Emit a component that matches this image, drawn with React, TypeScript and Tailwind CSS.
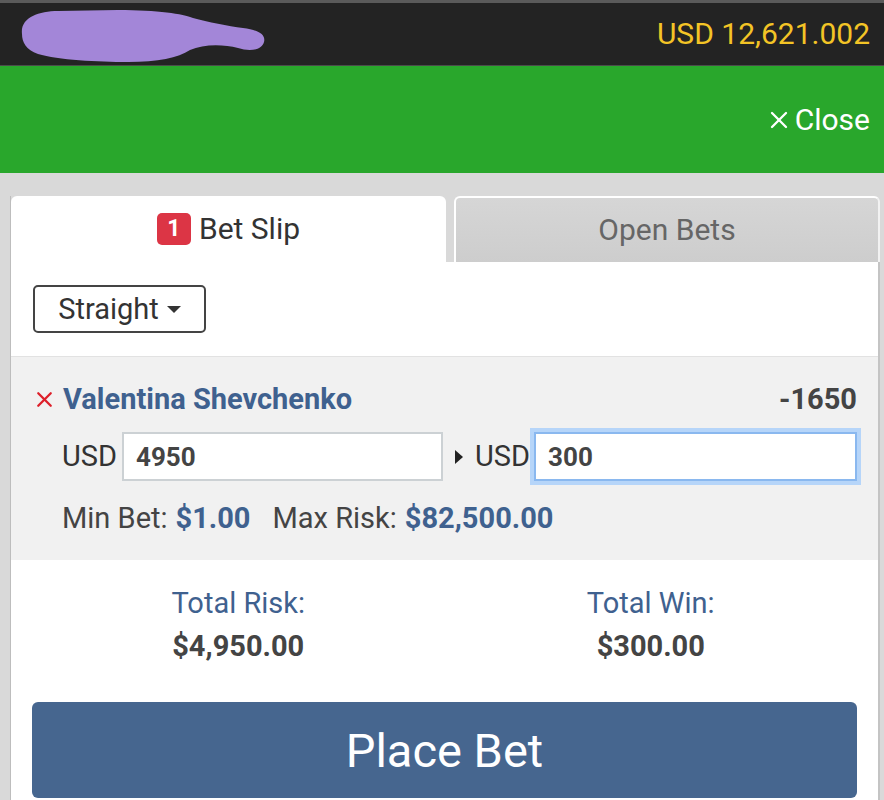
import { X } from 'lucide-react';

const font = { fontFamily: 'Roboto, "Liberation Sans", sans-serif' };

function Scribble() {
  return (
    <svg width="250" height="56" viewBox="0 0 250 56" className="block">
      <path
        d="M4 28 C2 12 20 5 40 5 L100 4 C140 4 165 8 175 12 C190 16 210 20 225 22 C240 24 248 28 246 36 C244 44 232 46 220 42 C205 38 185 38 172 44 C160 52 140 56 110 56 C80 56 40 54 20 48 C8 44 4 36 4 28 Z"
        fill="#a386d8"
      />
    </svg>
  );
}

export default function App() {
  return (
    <div className="w-[884px] h-[800px] overflow-hidden bg-[#d9d9d9]" style={font}>
      {/* 상단 잔액 바 */}
      <div className="h-[3px] bg-[#5a5a5a]" />
      <div className="h-[62px] bg-[#232323] flex items-center justify-between pl-[18px] pr-[14px]">
        <Scribble />
        <span className="text-[30px] leading-none text-[#f3c426]">USD 12,621.002</span>
      </div>
      <div className="h-[1px] bg-[#4b4b4b]" />

      {/* 닫기 바 */}
      <div className="h-[107px] bg-[#29a72c] flex items-center justify-end pr-[14px]">
        <span className="flex items-center gap-[2px] text-white text-[30px] leading-none">
          <X size={28} strokeWidth={2} />
          Close
        </span>
      </div>

      {/* 패널 */}
      <div className="pt-[23px] pl-[10px] pr-[4px]">
        <div className="border-l border-[#bdbdbd]">
          {/* 탭 */}
          <div className="flex h-[66px] bg-[#d9d9d9]">
            <div className="w-[435px] bg-white rounded-t-[6px] flex items-center justify-center gap-[8px]">
              <span className="w-[34px] h-[32px] rounded-[5px] bg-[#dc3545] text-white text-[23px] font-bold flex items-center justify-center">
                1
              </span>
              <span className="text-[30px] leading-none text-[#333]">Bet Slip</span>
            </div>
            <div className="ml-[8px] flex-1 rounded-t-[6px] border-2 border-b-0 border-white bg-gradient-to-b from-[#d6d6d6] to-[#cdcdcd] flex items-center justify-center border-r-[#f2f2f2]">
              <span className="text-[30px] leading-none text-[#666]">Open Bets</span>
            </div>
          </div>

          <div className="bg-white border-r-2 border-[#c4c4c4]">
            {/* 베팅 유형 */}
            <div className="h-[95px] pl-[22px] pt-[23px] border-b border-[#e2e2e2]">
              <button className="h-[48px] w-[173px] border-2 border-[#444] rounded-[5px] flex items-center justify-center gap-[8px] text-[29px] leading-none text-[#333]">
                Straight
                <span className="w-0 h-0 border-l-[7px] border-r-[7px] border-t-[7px] border-l-transparent border-r-transparent border-t-[#333]" />
              </button>
            </div>

            {/* 선택 항목 */}
            <div className="h-[203px] bg-[#f1f1f1] pl-[21px] pr-[21px] pt-[25px]">
              <div className="flex items-center justify-between h-[34px]">
                <div className="flex items-center gap-[6px]">
                  <X size={25} strokeWidth={2.2} color="#dd1f2a" />
                  <span className="text-[29px] leading-none font-bold text-[#3f618f]">Valentina Shevchenko</span>
                </div>
                <span className="text-[29px] leading-none font-bold text-[#444]">-1650</span>
              </div>

              <div className="flex items-center mt-[16px] pl-[30px] h-[49px]">
                <span className="text-[29px] leading-none text-[#333] w-[60px]">USD</span>
                <div className="w-[321px] h-[49px] border-2 border-[#ccd1d4] bg-white flex items-center pl-[12px] text-[26px] leading-none font-bold text-[#444]">
                  4950
                </div>
                <span className="ml-[12px] w-0 h-0 border-t-[7px] border-b-[7px] border-l-[8px] border-t-transparent border-b-transparent border-l-[#222]" />
                <span className="ml-[12px] text-[29px] leading-none text-[#333]">USD</span>
                <div className="ml-[4px] flex-1 h-[49px] border-2 border-[#8ab8ef] bg-white flex items-center pl-[12px] text-[26px] leading-none font-bold text-[#444] shadow-[0_0_0_4px_#b6d5f9]">
                  300
                </div>
              </div>

              <div className="mt-[20px] pl-[30px] flex items-center h-[34px] text-[29px] leading-none">
                <span className="text-[#444]">Min Bet:</span>
                <span className="ml-[8px] font-bold text-[#3f618f]">$1.00</span>
                <span className="ml-[22px] text-[#444]">Max Risk:</span>
                <span className="ml-[8px] font-bold text-[#3f618f]">$82,500.00</span>
              </div>
            </div>

            {/* 합계 */}
            <div className="px-[21px] pt-[25px] pb-[2px]">
              <div className="grid grid-cols-2 text-center">
                <div>
                  <div className="h-[36px] leading-[36px] text-[29px] text-[#3f618f]">Total Risk:</div>
                  <div className="mt-[7px] h-[36px] leading-[36px] text-[29px] font-bold text-[#444]">$4,950.00</div>
                </div>
                <div>
                  <div className="h-[36px] leading-[36px] text-[29px] text-[#3f618f]">Total Win:</div>
                  <div className="mt-[7px] h-[36px] leading-[36px] text-[29px] font-bold text-[#444]">$300.00</div>
                </div>
              </div>

              <button className="mt-[38px] w-full h-[96px] rounded-[6px] bg-[#46668f] text-white text-[47px] leading-none">
                Place Bet
              </button>
            </div>
          </div>
        </div>
      </div>
    </div>
  );
}
